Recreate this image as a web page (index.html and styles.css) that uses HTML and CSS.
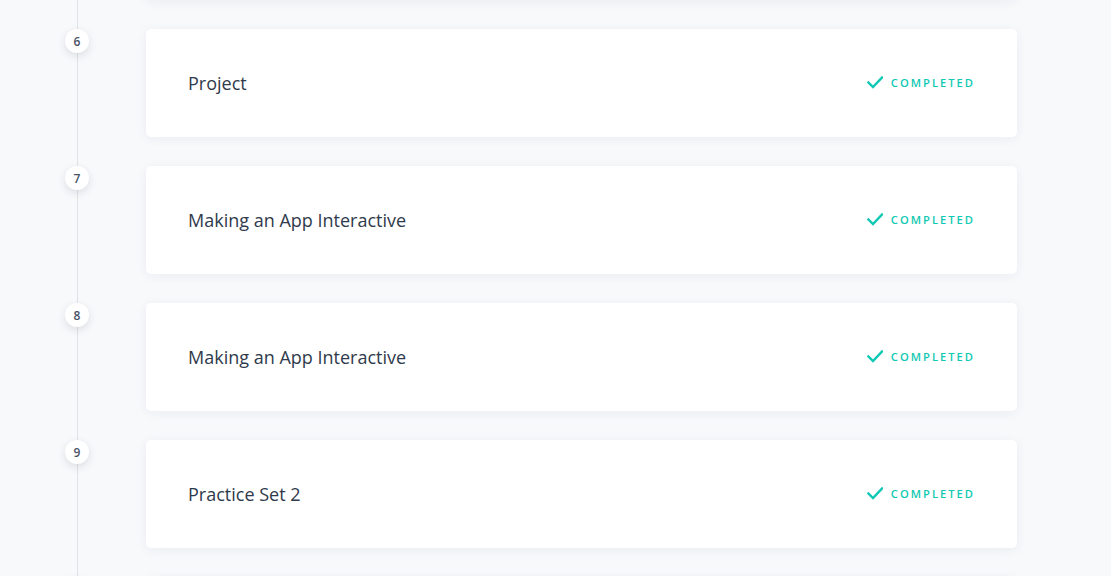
FILE: index.html
```html
<!DOCTYPE html>
<html>
<head>
<meta charset="utf-8">
<link rel="stylesheet" href="styles.css">
</head>
<body>
<ol class="timeline">
  <li class="step">
    <span class="badge"></span>
    <div class="card"></div>
  </li>
  <li class="step">
    <span class="badge">6</span>
    <div class="card"><span class="title">Project</span><span class="status"><svg class="check" viewBox="0 0 16 13"><path d="M1.5 6.5 L6 11 L15 1.5"/></svg>COMPLETED</span></div>
  </li>
  <li class="step">
    <span class="badge">7</span>
    <div class="card"><span class="title">Making an App Interactive</span><span class="status"><svg class="check" viewBox="0 0 16 13"><path d="M1.5 6.5 L6 11 L15 1.5"/></svg>COMPLETED</span></div>
  </li>
  <li class="step">
    <span class="badge">8</span>
    <div class="card"><span class="title">Making an App Interactive</span><span class="status"><svg class="check" viewBox="0 0 16 13"><path d="M1.5 6.5 L6 11 L15 1.5"/></svg>COMPLETED</span></div>
  </li>
  <li class="step">
    <span class="badge">9</span>
    <div class="card"><span class="title">Practice Set 2</span><span class="status"><svg class="check" viewBox="0 0 16 13"><path d="M1.5 6.5 L6 11 L15 1.5"/></svg>COMPLETED</span></div>
  </li>
  <li class="step">
    <span class="badge"></span>
    <div class="card"></div>
  </li>
</ol>
</body>
</html>
```
FILE: styles.css
```css
html, body {
  margin: 0;
  padding: 0;
  background: #f8f9fb;
  overflow: hidden;
  height: 576px;
}
body {
  font-family: "Open Sans", "Noto Sans", sans-serif;
}
.timeline {
  list-style: none;
  margin: -108px 0 0 0;
  padding: 0 0 40px 0;
  width: 1111px;
  display: flex;
  flex-direction: column;
  gap: 29px;
  background: linear-gradient(#e0e2e7, #e0e2e7) no-repeat 77px 0 / 1px 100%;
}
.step {
  display: flex;
  align-items: flex-start;
  padding-left: 65px;
}
.badge {
  flex: none;
  width: 24px;
  height: 24px;
  border-radius: 50%;
  background: #fff;
  box-shadow: 0 3px 8px rgba(30, 40, 60, 0.13);
  display: flex;
  align-items: center;
  justify-content: center;
  font-size: 12px;
  font-weight: 600;
  color: #4a5466;
  margin-right: 57px;
}
.card {
  width: 871px;
  height: 108px;
  box-sizing: border-box;
  background: #fff;
  border-radius: 5px;
  box-shadow: 0 2px 12px rgba(30, 40, 70, 0.06);
  display: flex;
  align-items: center;
  justify-content: space-between;
  padding: 0 42px 0 42px;
}
.title {
  font-size: 18px;
  color: #2f3a4b;
}
.status {
  display: flex;
  align-items: center;
  font-size: 11.2px;
  font-weight: 600;
  letter-spacing: 2px;
  color: #10c9b4;
  margin-bottom: 2px;
}
.check {
  width: 16px;
  height: 13px;
  margin-right: 8px;
  fill: none;
  stroke: #10c9b4;
  stroke-width: 2.4;
  stroke-linecap: square;
}
```
